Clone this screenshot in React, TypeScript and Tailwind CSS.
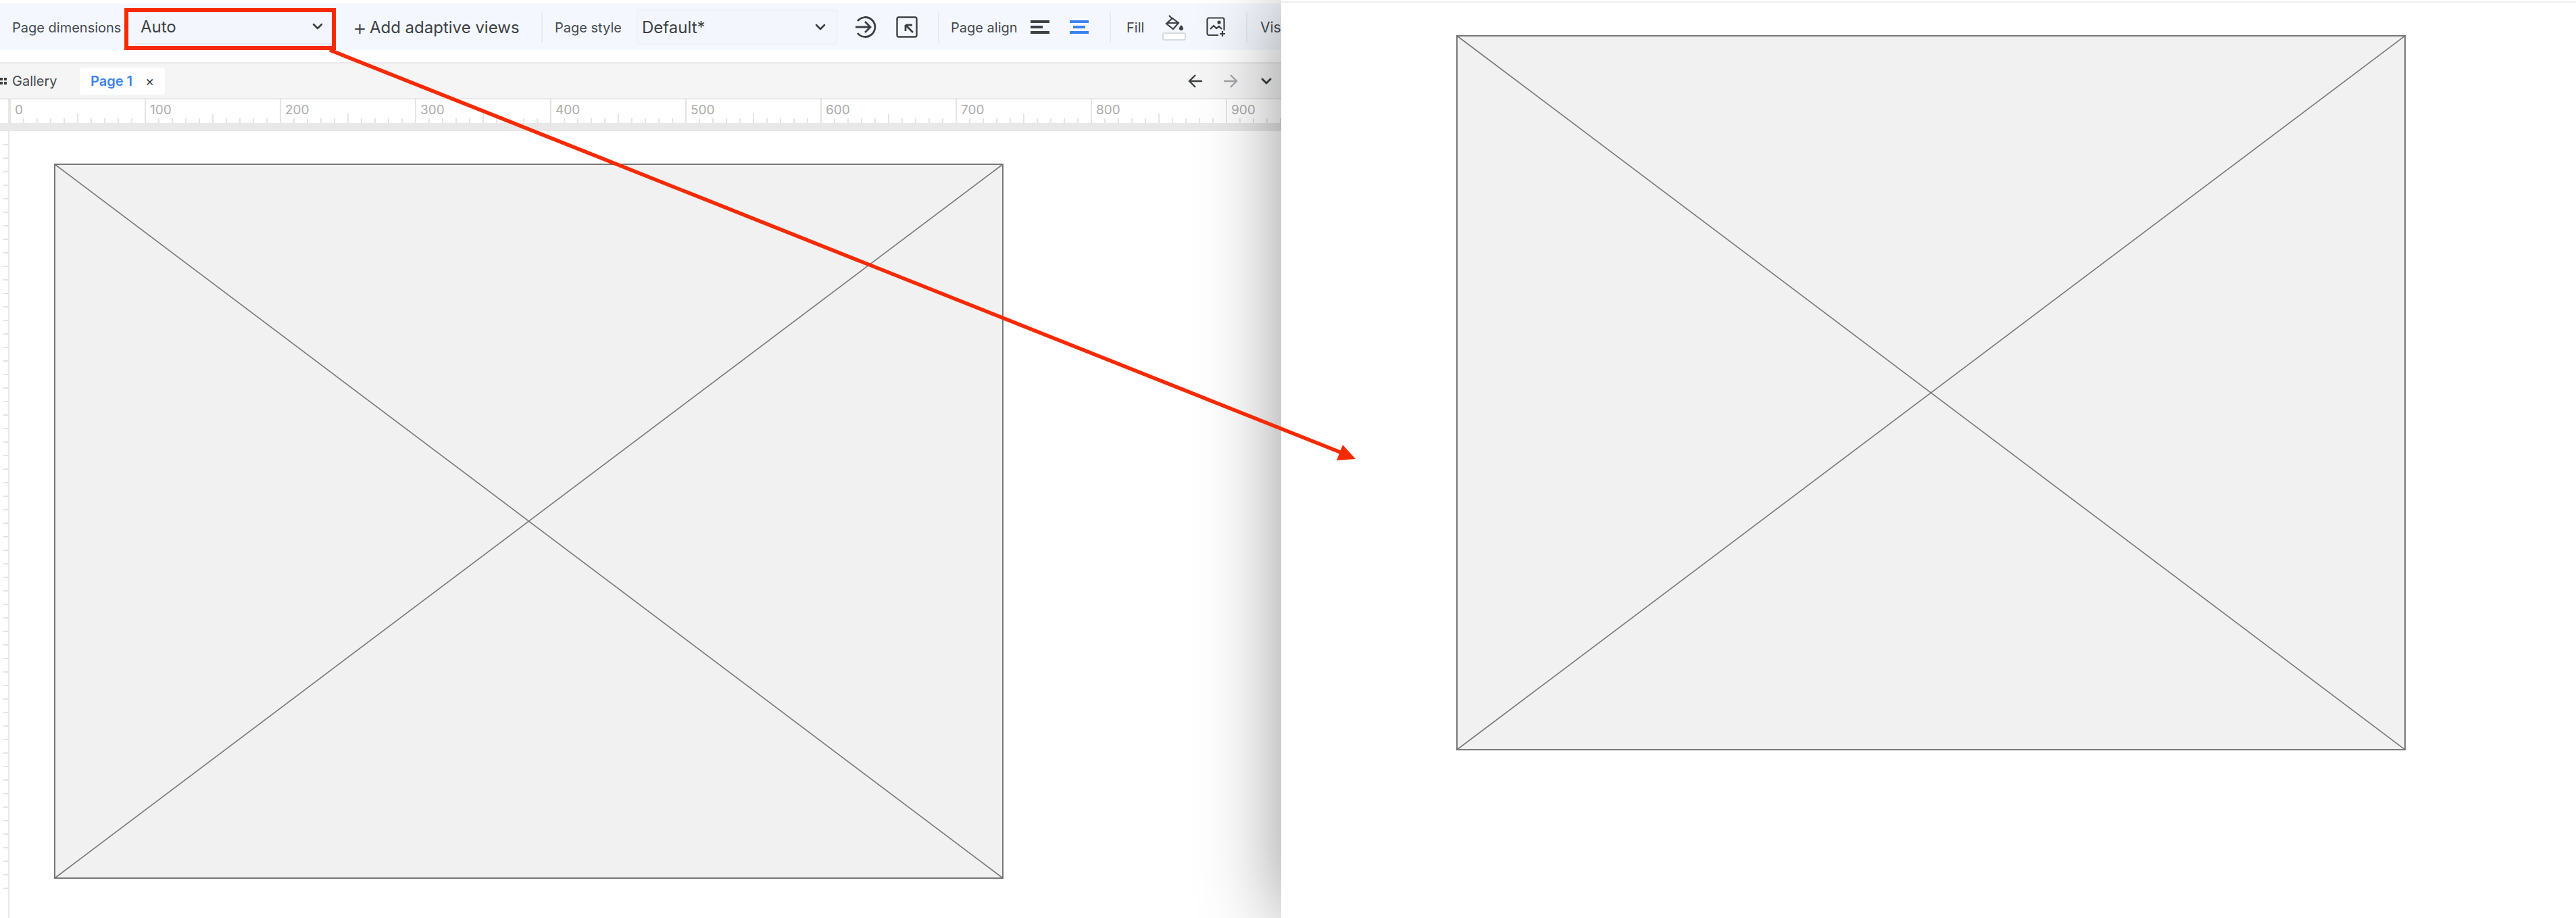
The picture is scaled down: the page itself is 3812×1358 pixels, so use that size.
import { ChevronDown } from "lucide-react"

const rulerMarks = [0, 100, 200, 300, 400, 500, 600, 700, 800, 900]
const ticks = [0, 1, 2, 3, 4, 5, 6, 7, 8, 9]
const sideTicks = Array.from({ length: 56 }, (_, i) => i)

function Divider({ className }: { className: string }) {
  return <div className={`h-[46px] w-[2px] shrink-0 bg-[#e6ebf3] ${className}`} />
}

function Placeholder() {
  return (
    <svg className="block h-[1058px] w-[1405px] shrink-0" viewBox="0 0 1405 1058" preserveAspectRatio="none">
      <rect x="1" y="1" width="1403" height="1056" fill="#f1f1f1" stroke="#777777" strokeWidth="2" />
      <path d="M1 1 1404 1057M1404 1 1 1057" fill="none" stroke="#777777" strokeWidth="1.6" />
    </svg>
  )
}

function Toolbar() {
  return (
    <div className="mt-[5px] flex h-[69px] items-center bg-[#f4f8fe] text-[20px] text-[#45494f]">
      <span className="ml-[18px] w-[162px] shrink-0 whitespace-nowrap pt-[3px]">Page dimensions</span>
      <div className="ml-[18px] flex h-[52px] w-[296px] shrink-0 items-center justify-between rounded-[4px] border-b-2 border-[#e6ebf3] bg-[#f3f7fd] pl-[10px] pr-[12px] pt-[3px] text-[24px] text-[#3c4043]">
        Auto
        <ChevronDown size={24} strokeWidth={2.6} color="#3c4043" className="-mt-[3px]" />
      </div>
      <div className="ml-[28px] flex w-[246px] shrink-0 items-center gap-[4px] whitespace-nowrap pt-[3px] text-[24px] text-[#3c4043]">
        <span className="text-[32px] font-light leading-none">+</span>
        Add adaptive views
      </div>
      <Divider className="ml-[33px]" />
      <span className="ml-[18px] w-[100px] shrink-0 whitespace-nowrap pt-[3px]">Page style</span>
      <div className="ml-[21px] flex h-[52px] w-[298px] shrink-0 items-center justify-between rounded-[4px] border-2 border-[#edf1f8] bg-[#f3f7fd] pl-[6px] pr-[12px] pt-[3px] text-[24px] text-[#3c4043]">
        Default*
        <ChevronDown size={24} strokeWidth={2.6} color="#3c4043" className="-mt-[3px]" />
      </div>
      <svg className="ml-[25px] shrink-0" width="32" height="34" viewBox="0 0 32 34" fill="none" stroke="#3c4043" strokeWidth="2.8">
        <path d="M4 8A14.5 14.5 0 1 1 4 26" />
        <path d="M1 17H23M15 9l8 8-8 8" />
      </svg>
      <svg className="ml-[29px] shrink-0" width="32" height="32" viewBox="0 0 32 32" fill="none" stroke="#3c4043" strokeWidth="2.4">
        <rect x="1.5" y="1.5" width="29" height="29" rx="2.5" />
        <path d="M14 14H24M14 14V23M14 14 25 25" transform="translate(0 -1)" strokeWidth="2.8" />
      </svg>
      <Divider className="ml-[30px]" />
      <span className="ml-[17px] w-[97px] shrink-0 whitespace-nowrap pt-[3px]">Page align</span>
      <svg className="ml-[21px] shrink-0" width="28" height="20" viewBox="0 0 28 20" fill="#3c4043">
        <rect width="28" height="4" />
        <rect y="8" width="18" height="4" />
        <rect y="16" width="28" height="4" />
      </svg>
      <svg className="ml-[30px] shrink-0" width="28" height="20" viewBox="0 0 28 20" fill="#3b82f0">
        <rect width="28" height="4" />
        <rect x="5" y="8" width="18" height="4" />
        <rect y="16" width="28" height="4" />
      </svg>
      <Divider className="ml-[31px]" />
      <span className="ml-[23px] w-[26px] shrink-0 whitespace-nowrap pt-[3px]">Fill</span>
      <div className="ml-[26px] flex w-[36px] shrink-0 flex-col items-center gap-[1px] pt-[2px]">
        <svg width="30" height="25" viewBox="0 0 30 25" fill="none" stroke="#3c4043" strokeWidth="2.2">
          <path d="M13 5 22 12 14 21 4 13Z" />
          <path d="M5 12H22M12 5 8 1" />
          <path d="M26 15c2 2.400 3 3.600 3 5a3 3 0 0 1-6 0c0-1.400 1-2.600 3-5Z" fill="#3c4043" stroke="none" />
        </svg>
        <div className="h-[12px] w-[35px] rounded-[3px] border-2 border-[#d6d9de] bg-white" />
      </div>
      <svg className="ml-[30px] shrink-0" width="30" height="30" viewBox="0 0 30 30" fill="none" stroke="#3c4043" strokeWidth="2.2">
        <path d="M18 27H4a2.500 2.500 0 0 1-2.500-2.500V4A2.500 2.500 0 0 1 4 1.500h20A2.500 2.500 0 0 1 26.500 4v16" />
        <path d="M6 18l5-5 4 4 4-3 4 4" />
        <circle cx="19" cy="8" r="2.600" fill="#3c4043" stroke="none" />
        <path d="M24 21v8M20 25h8" />
      </svg>
      <Divider className="ml-[29px]" />
      <span className="ml-[19px] shrink-0 whitespace-nowrap pt-[3px] text-[21px]">Visual</span>
    </div>
  )
}

function TabBar() {
  return (
    <div className="mt-[18px] flex h-[55px] items-center border-y-2 border-[#e8e8e8] bg-[#f5f5f5] text-[20px]">
      <svg className="shrink-0" width="10" height="12" viewBox="0 0 10 12" fill="#3c4043">
        <rect y="1" width="4" height="4" />
        <rect x="6" y="1" width="4" height="4" />
        <rect y="7" width="4" height="4" />
        <rect x="6" y="7" width="4" height="4" />
      </svg>
      <span className="ml-[8px] w-[65px] shrink-0 text-[#45494f]">Gallery</span>
      <div className="ml-[35px] flex h-[40px] w-[126px] shrink-0 items-center rounded-[4px] bg-white pl-[16px]">
        <span className="w-[63px] whitespace-nowrap font-semibold text-[#3b82e6]">Page 1</span>
        <span className="ml-[18px] text-[#3c4043]">×</span>
      </div>
      <svg className="ml-[1514px] shrink-0" width="22" height="22" viewBox="0 0 22 22" fill="none" stroke="#3c4043" strokeWidth="2.4">
        <path d="M21 11H2M11 2 2 11l9 9" />
      </svg>
      <svg className="ml-[30px] shrink-0" width="22" height="22" viewBox="0 0 22 22" fill="none" stroke="#a3a5a8" strokeWidth="2.4">
        <path d="M1 11H20M11 2l9 9-9 9" />
      </svg>
      <ChevronDown className="ml-[30px] shrink-0" size={24} strokeWidth={3} color="#3c4043" />
    </div>
  )
}

function TopRuler() {
  return (
    <div className="flex h-[35px] shrink-0 overflow-hidden bg-white">
      <div className="w-[14px] shrink-0 border-r-2 border-[#e8e8e8]" />
      {rulerMarks.map((mark) => (
        <div key={mark} className="relative flex h-full w-[200px] shrink-0 items-end">
          <span className="absolute left-[8px] top-[3px] text-[19px] leading-[26px] text-[#ababab]">{mark}</span>
          {ticks.map((t) => (
            <div
              key={t}
              className={`w-[20px] shrink-0 border-l-2 border-[#e4e4e4] ${t === 0 ? "h-full" : t === 5 ? "h-[14px]" : "h-[7px]"}`}
            />
          ))}
        </div>
      ))}
    </div>
  )
}

function SideRuler() {
  return (
    <div className="flex w-[14px] shrink-0 flex-col items-end gap-[18px] overflow-hidden border-r-2 border-[#e8e8e8] pt-[19px]">
      {sideTicks.map((t) => (
        <div key={t} className="h-[2px] w-[7px] shrink-0 bg-[#e4e4e4]" />
      ))}
    </div>
  )
}

export default function App() {
  return (
    <div className="relative flex h-[1358px] w-[3812px] overflow-hidden bg-white font-['Inter',sans-serif]">
      {/* editor side */}
      <div className="flex w-[1896px] shrink-0 flex-col overflow-hidden">
        <Toolbar />
        <TabBar />
        <TopRuler />
        <div className="h-[12px] shrink-0 bg-[#e8e8e8]" />
        <div className="flex min-h-0 flex-1">
          <SideRuler />
          <div className="pl-[66px] pt-[48px]">
            <Placeholder />
          </div>
        </div>
      </div>

      {/* preview side */}
      <div className="relative flex-1 bg-white pl-[259px] shadow-[0_0_110px_rgba(0,0,0,0.42)]">
        <div className="absolute inset-x-0 top-[2px] h-[2px] bg-[#eeeeee]" />
        <div className="pt-[52px]">
          <Placeholder />
        </div>
      </div>

      {/* annotation */}
      <div className="absolute left-[184px] top-[12px] h-[62px] w-[313px] border-[6px] border-[#f62a00]" />
      <svg className="absolute inset-0" width="3812" height="1358" viewBox="0 0 3812 1358" fill="none">
        <path d="M488 74 1986 670" stroke="#f62a00" strokeWidth="5.5" />
        <path d="M2006 679 1987 658 1978 681Z" fill="#f62a00" />
      </svg>
    </div>
  )
}
